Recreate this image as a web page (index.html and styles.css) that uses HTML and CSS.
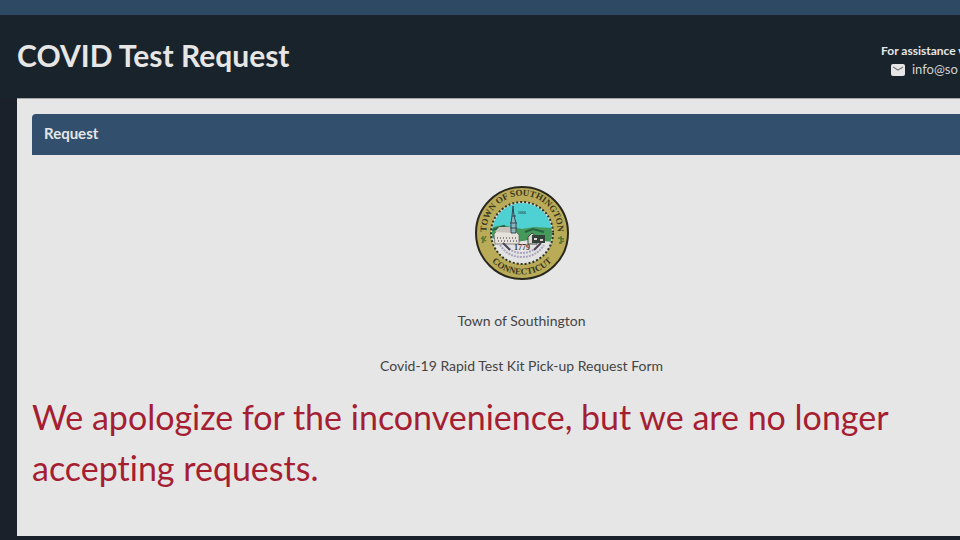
FILE: index.html
```html
<!DOCTYPE html>
<html lang="en">
    <head>
        <meta charset="utf-8">
        <title>COVID Test Request</title>
        <link rel="stylesheet" href="styles.css">
    </head>
    <body>
        <div class="topbar"></div>
        <header class="header">
            <h1>COVID Test Request</h1>
            <address class="contact">
                <strong>For assistance w</strong>
                <a href="#contact">
                    <svg class="mail" viewBox="0 0 14 12" aria-hidden="true">
                        <rect width="14" height="12" rx="2" fill="#e6e6e6"/>
                        <path d="M2 3l5 3 5-3" fill="none" stroke="#777b7f" stroke-width="1.2"/>
                    </svg>
                    info@so
                </a>
            </address>
        </header>

        <main class="form">
            <h2 class="panelTitle">Request</h2>
            <div class="intro">
                <svg class="seal" viewBox="0 0 94 94" role="img" aria-label="Town of Southington, Connecticut">
                    <defs>
                        <path id="arcTop" d="M12 51a35.5 35.5 0 1 1 70 0"/>
                        <path id="arcBottom" d="M5.5 47a41.5 41.5 0 0 0 83 0"/>
                        <clipPath id="inner"><circle cx="47" cy="47" r="30"/></clipPath>
                    </defs>
                    <circle cx="47" cy="47" r="46" fill="#b9ab58" stroke="#29291d" stroke-width="2"/>
                    <circle cx="47" cy="47" r="31" fill="#e3e3e3"/>
                    <g clip-path="url(#inner)">
                        <path d="M15 15h64v38H15z" fill="#4fd0d2"/>
                        <path d="M15 43q8-5 17-3l15 3 12-2 20 1v18H15z" fill="#449a5b"/>
                        <path d="M17 44l12-4 3 4M50 46l8-3 11 3M42 57l13-3" fill="none" stroke="#276442" stroke-width="2"/>
                        <path d="M15 52l26 4 12-2 26 2v24H15z" fill="#e3e3e3"/>
                        <path d="M19 48l4-4h16l5 5v9H20z" fill="#e5e2dc" stroke="#625d59" stroke-width=".7"/>
                        <path d="M20 46l4-5h14l4 6z" fill="#c7c2bb"/>
                        <path d="M36 47V37l1-7 1-10 1 10 2 7v10z" fill="#8fb4bb" stroke="#304a55" stroke-width="1"/>
                        <path d="M35 37h7M35 42h7M37 30h4" stroke="#304a55"/>
                        <path d="M22 52h19M23 55h19" stroke="#8b8385" stroke-width="2" stroke-dasharray="1 2"/>
                        <path d="M53 51l4-4 5 4v7h-9z" fill="#d8d6cf" stroke="#454c42"/>
                        <path d="M57 49h13v8H57z" fill="#34413b"/>
                        <path d="M59 53h3M65 54h3" stroke="#d8d6cf" stroke-width="2"/>
                        <path d="M25 59q8 12 22 12t22-12M30 58q6 9 17 9t17-9" fill="none" stroke="#aaa5bd" stroke-width="2" stroke-dasharray="2 1"/>
                        <path d="M28 57l7 7M66 57l-7 7" stroke="#4c4657" stroke-width="2"/>
                        <text x="47" y="64" class="sealYear">1779</text>
                        <text x="47" y="28" class="sealSmall">1666</text>
                    </g>
                    <circle cx="47" cy="47" r="31" fill="none" stroke="#303629" stroke-width="2" stroke-dasharray="2 2"/>
                    <path d="M8 50v7M6 52l5 3M11 50l-4 7M86 50v8M83 52l6 1M84 57l5-2" stroke="#607a31" stroke-width="1.5"/>
                    <text class="sealText"><textPath href="#arcTop" startOffset="50%">TOWN OF SOUTHINGTON</textPath></text>
                    <text class="sealText"><textPath href="#arcBottom" startOffset="50%">CONNECTICUT</textPath></text>
                </svg>
                <p>Town of Southington</p>
                <p>Covid-19 Rapid Test Kit Pick-up Request Form</p>
            </div>
            <p class="notice">We apologize for the inconvenience, but we are no longer accepting requests.</p>
        </main>
    </body>
</html>
```

FILE: styles.css
```css
body {
    margin: 0;
    font-family: Lato, 'Liberation Sans', sans-serif;
    font-size: 14px;
    line-height: 20px;
    font-variant-ligatures: none;
    background: #1a212a;
    color: #444;
}

.topbar {
    height: 15px;
    background: #2d4963;
}

.header {
    display: flex;
    justify-content: space-between;
    align-items: flex-start;
    padding: 20px 0 19px 17px;
    background: #19232b;
    color: #e6e6e6;
}

h1 {
    margin: 0;
    font-size: 30px;
    line-height: 40px;
    font-weight: bold;
}

.contact {
    width: 79px;
    padding-top: 6px;
    font-size: 13px;
    line-height: 19px;
    font-style: normal;
    white-space: nowrap;
    overflow: hidden;
}

.contact strong {
    display: block;
    font-size: 12px;
}

.contact a {
    display: flex;
    align-items: center;
    gap: 7px;
    padding-left: 10px;
    color: #d0d2d4;
    text-decoration: none;
}

.mail {
    flex: none;
    width: 14px;
    height: 12px;
}

.form {
    margin: 0 0 3px 17px;
    padding: 15px 0 43px 15px;
    border-top: 1px solid #a5a5a8;
    background: #e6e6e6;
}

.panelTitle {
    margin: 0;
    padding: 9px 12px 11px;
    border-radius: 4px 0 0 0;
    background: #334f6e;
    color: #e6e6e6;
    font-size: 15px;
    line-height: 21px;
}

.intro {
    padding: 31px 0 0 51px;
    text-align: center;
}

.intro p {
    margin: 0 0 25px;
}

.intro p:last-child {
    margin-bottom: 15px;
}

.seal {
    display: block;
    width: 94px;
    height: 94px;
    margin: 0 auto 31px;
}

.sealText {
    font: bold 9px 'Liberation Serif', serif;
    text-anchor: middle;
    fill: #37351f;
}

.sealYear {
    font: bold 8px 'Liberation Serif', serif;
    text-anchor: middle;
    fill: #393747;
}

.sealSmall {
    font: bold 4px 'Liberation Serif', serif;
    text-anchor: middle;
    fill: #235b68;
}

.notice {
    margin: 0;
    padding-right: 40px;
    color: #a51e32;
    font-size: 34px;
    line-height: 51px;
}
```
